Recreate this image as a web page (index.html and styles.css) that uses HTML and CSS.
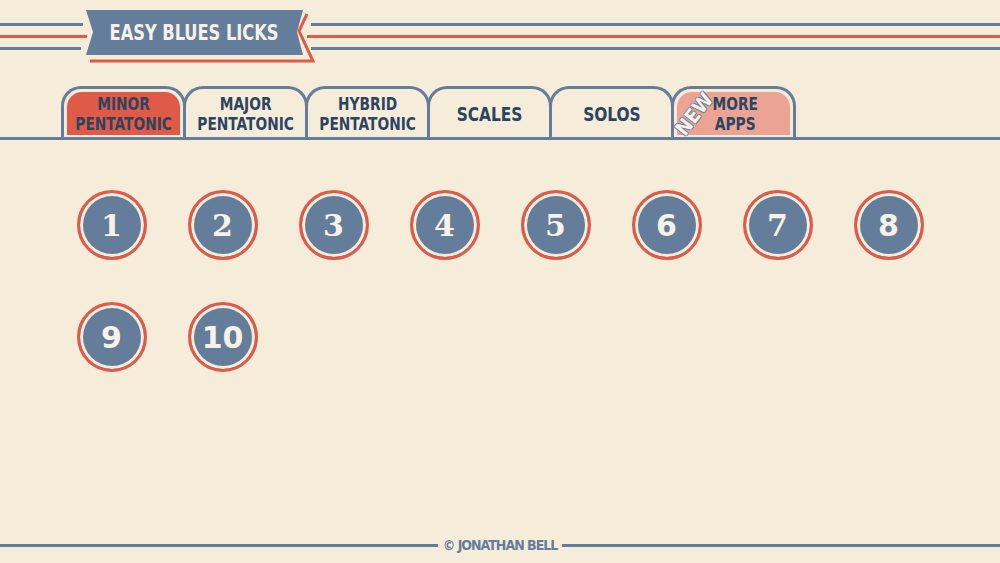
FILE: index.html
```html
<!DOCTYPE html>
<html lang="en">
<head>
    <meta charset="UTF-8">
    <meta name="viewport" content="width=device-width, initial-scale=1.0">
    <title>Easy Blues Licks</title>
    <link rel="stylesheet" href="styles.css">
</head>
<body>

    <div class="header">
        <div class="stripes stripes-left">
            <span class="line blue top"></span>
            <span class="line red mid"></span>
            <span class="line blue bot"></span>
        </div>
        <div class="banner">
            <svg class="banner-shape" width="226" height="56" viewBox="0 0 226 56">
                <polyline points="223,6 215,23 229,53 6,53" fill="none" stroke="#e05a47" stroke-width="3"/>
                <polygon points="2,2 219,2 213,24 219,47 2,47 9,24" fill="#647d9b"/>
            </svg>
            <h1 class="title">EASY BLUES LICKS</h1>
        </div>
        <div class="stripes stripes-right">
            <span class="line blue top"></span>
            <span class="line red mid"></span>
            <span class="line blue bot"></span>
        </div>
    </div>

    <div class="tabs">
        <a href="#" class="tab active"><span class="tab-inner"><span class="label">MINOR<br>PENTATONIC</span></span></a>
        <a href="#" class="tab"><span class="tab-inner"><span class="label">MAJOR<br>PENTATONIC</span></span></a>
        <a href="#" class="tab"><span class="tab-inner"><span class="label">HYBRID<br>PENTATONIC</span></span></a>
        <a href="#" class="tab"><span class="tab-inner single"><span class="label">SCALES</span></span></a>
        <a href="#" class="tab"><span class="tab-inner single"><span class="label">SOLOS</span></span></a>
        <a href="#" class="tab more"><span class="tab-inner"><span class="label">MORE<br>APPS</span></span><span class="new">NEW</span></a>
    </div>

    <div class="licks">
        <a href="#" class="lick serif">1</a>
        <a href="#" class="lick serif">2</a>
        <a href="#" class="lick serif">3</a>
        <a href="#" class="lick serif">4</a>
        <a href="#" class="lick serif">5</a>
        <a href="#" class="lick">6</a>
        <a href="#" class="lick serif">7</a>
        <a href="#" class="lick">8</a>
        <a href="#" class="lick">9</a>
        <a href="#" class="lick">10</a>
    </div>

    <div class="footer">
        <span class="footer-line"></span>
        <span class="credit">&copy; JONATHAN BELL</span>
        <span class="footer-line"></span>
    </div>

</body>
</html>
```

FILE: styles.css
```css
* {
  margin: 0;
  padding: 0;
  box-sizing: border-box;
}
body {
  font-family: "DejaVu Sans Condensed", "DejaVu Sans", sans-serif;
  font-weight: bold;
  background-color: #f6ecda;
  height: 563px;
  display: flex;
  flex-direction: column;
  overflow: hidden;
}
a {
  text-decoration: none;
}

/* header with the ribbon */
.header {
  display: flex;
  height: 64px;
}
.stripes {
  display: flex;
  flex-direction: column;
  padding-top: 23px;
  gap: 9px;
}
.stripes-left {
  width: 84px;
}
.stripes-right {
  flex: 1;
}
.line {
  display: block;
  height: 3px;
}
.line.blue {
  background-color: #647d9b;
}
.line.red {
  background-color: #e05a47;
}
.stripes-left .top { width: 83px; }
.stripes-left .mid { width: 87px; }
.stripes-left .bot { width: 81px; }
.stripes-right .top { margin-left: 1px; }
.stripes-right .mid { margin-left: -3px; }
.stripes-right .bot { margin-left: 1px; }

.banner {
  position: relative;
  width: 226px;
  height: 56px;
  margin-top: 8px;
  padding: 2px 7px 9px 2px;
  display: flex;
  align-items: center;
  justify-content: center;
}
.banner-shape {
  position: absolute;
  top: 0;
  left: 0;
  overflow: visible;
}
.title {
  position: relative;
  font-size: 22px;
  color: #f7f1e6;
  white-space: nowrap;
  transform: scaleX(0.82);
}

/* tabs */
.tabs {
  display: flex;
  margin-top: 22px;
  padding-left: 61px;
  border-bottom: 3px solid #647d9b;
}
.tab {
  position: relative;
  width: 125px;
  height: 51px;
  border: 3px solid #647d9b;
  border-bottom: none;
  border-radius: 20px 20px 0 0;
  padding: 3px 3px 2px 3px;
}
.tab + .tab {
  margin-left: -3px;
}
.tab-inner {
  display: flex;
  align-items: center;
  justify-content: center;
  height: 100%;
  border-radius: 15px 15px 0 0;
  text-align: center;
  font-size: 17px;
  line-height: 20px;
  color: #2b4460;
}
.tab-inner.single {
  font-size: 19px;
}
.label {
  display: inline-block;
  white-space: nowrap;
  transform: scaleX(0.9);
}
.tab.active .tab-inner {
  background-color: #e05a47;
}
.tab.more .tab-inner {
  background-color: #eca393;
  padding-left: 4px;
}
.new {
  position: absolute;
  left: 20px;
  top: 25px;
  transform: translate(-50%, -50%) rotate(-52deg);
  font-size: 20px;
  color: #f7f1e6;
  text-shadow: -1px 0 #647d9b, 1px 0 #647d9b, 0 -1px #647d9b, 0 1px #647d9b;
}

/* lick buttons */
.licks {
  display: grid;
  grid-template-columns: repeat(8, 111px);
  grid-auto-rows: 70px;
  row-gap: 42px;
  margin-top: 50px;
  padding-left: 56px;
}
.lick {
  justify-self: center;
  width: 70px;
  height: 70px;
  border: 3px solid #e05a47;
  border-radius: 50%;
  background-color: #647d9b;
  box-shadow: inset 0 0 0 3px #f6ecda;
  display: flex;
  align-items: center;
  justify-content: center;
  color: #f7f1e6;
  font-family: "DejaVu Sans", sans-serif;
  font-size: 30px;
  font-weight: bold;
}
.lick.serif {
  font-family: "DejaVu Serif", serif;
}

/* footer */
.footer {
  margin-top: auto;
  margin-bottom: 10px;
  display: flex;
  align-items: center;
  gap: 5px;
}
.footer-line {
  flex: 1;
  height: 3px;
  background-color: #647d9b;
}
.credit {
  font-size: 14px;
  color: #647d9b;
  letter-spacing: -1px;
}
```
